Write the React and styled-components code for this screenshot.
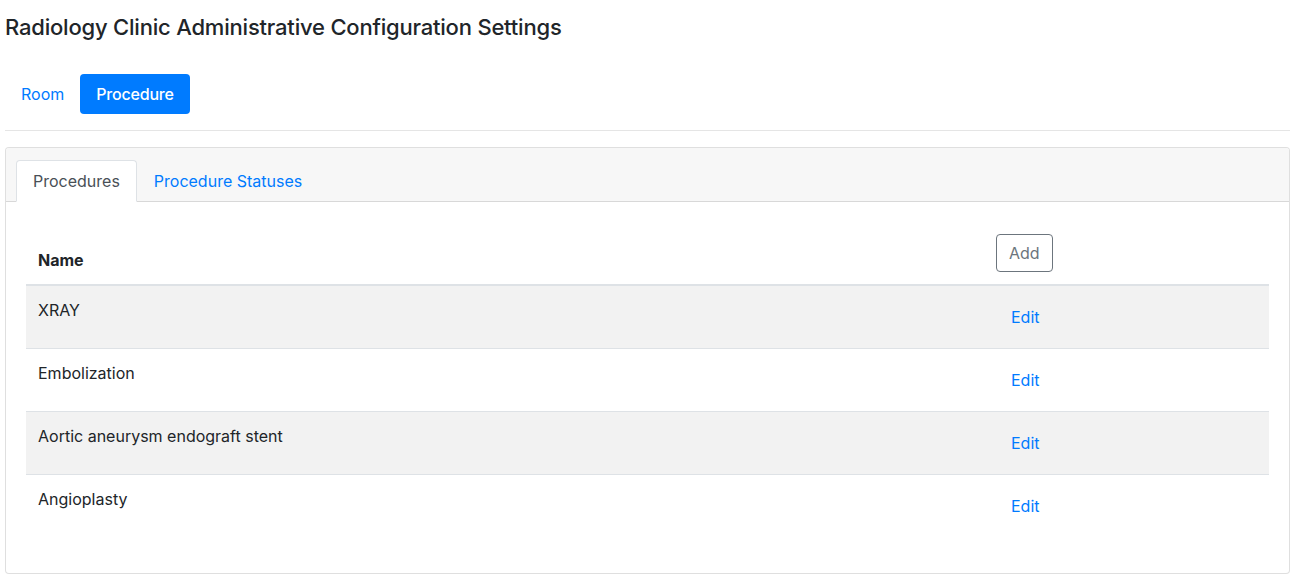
import React from "react";
import styled, { createGlobalStyle } from "styled-components";

const Global = createGlobalStyle`
  * { box-sizing: border-box; }
  body {
    margin: 0;
    font-family: Inter, "Noto Sans", "Liberation Sans", sans-serif;
    font-size: 16px;
    line-height: 1.5;
    color: #212529;
    background: #fff;
  }
`;

const Page = styled.div`
  padding: 13px 9px 0 5px;
`;

const Title = styled.h4`
  margin: 0;
  font-size: 22px;
  font-weight: 500;
  line-height: 1.3;
  letter-spacing: -0.2px;
  color: #212529;
`;

const Pills = styled.nav`
  display: flex;
  margin-top: 32px;
`;

const Pill = styled.a`
  display: block;
  padding: 8px 16px;
  border-radius: 4px;
  font-size: 16px;
  line-height: 24px;
  text-decoration: none;
  cursor: pointer;
  color: ${(p) => (p.$active ? "#fff" : "#007bff")};
  background: ${(p) => (p.$active ? "#007bff" : "transparent")};
  font-weight: ${(p) => (p.$active ? 500 : 400)};
  letter-spacing: ${(p) => (p.$active ? "-0.2px" : "0")};
`;

const Rule = styled.hr`
  margin: 16px 0 16px;
  border: 0;
  border-top: 1px solid rgba(0, 0, 0, 0.1);
`;

const Card = styled.div`
  border: 1px solid rgba(0, 0, 0, 0.125);
  border-radius: 4px;
  background: #fff;
`;

const CardHeader = styled.div`
  background: #f7f7f7;
  border-bottom: 1px solid rgba(0, 0, 0, 0.125);
  padding: 12px 20px 0 10px;
  border-radius: 3px 3px 0 0;
`;

const Tabs = styled.ul`
  display: flex;
  list-style: none;
  margin: 0 0 -1px;
  padding: 0;
`;

const Tab = styled.li`
  padding: 8px 16px;
  font-size: 16px;
  line-height: 24px;
  border: 1px solid ${(p) => (p.$active ? "#dee2e6" : "transparent")};
  border-bottom-color: ${(p) => (p.$active ? "#fff" : "transparent")};
  border-radius: 4px 4px 0 0;
  background: ${(p) => (p.$active ? "#fff" : "transparent")};
  color: ${(p) => (p.$active ? "#495057" : "#007bff")};
  cursor: pointer;
`;

const CardBody = styled.div`
  padding: 20px 20px 36px;
`;

const Table = styled.table`
  width: 100%;
  border-collapse: collapse;
  table-layout: fixed;
`;

const Th = styled.th`
  padding: 12px;
  text-align: left;
  vertical-align: bottom;
  font-weight: 700;
  font-size: 16px;
  line-height: 24px;
  border-bottom: 2px solid #dee2e6;
  width: ${(p) => p.$w || "auto"};
`;

const Row = styled.tr`
  background: ${(p) => (p.$striped ? "#f2f2f2" : "transparent")};
`;

const Td = styled.td`
  padding: 12px;
  vertical-align: top;
  font-size: 16px;
  line-height: 24px;
  border-top: ${(p) => (p.$first ? "0" : "1px solid #dee2e6")};
`;

const OutlineButton = styled.button`
  font-family: inherit;
  font-size: 16px;
  line-height: 24px;
  padding: 6px 12px;
  border: 1px solid #6c757d;
  border-radius: 4px;
  background: transparent;
  color: #6c757d;
  cursor: pointer;
`;

const LinkButton = styled.button`
  font-family: inherit;
  font-size: 16px;
  line-height: 24px;
  padding: 6px 14px;
  border: 1px solid transparent;
  background: transparent;
  color: #007bff;
  cursor: pointer;
`;

const procedures = ["XRAY", "Embolization", "Aortic aneurysm endograft stent", "Angioplasty"];

export default function App() {
  return (
    <Page>
      <Global />
      <Title>Radiology Clinic Administrative Configuration Settings</Title>
      <Pills>
        <Pill>Room</Pill>
        <Pill $active>Procedure</Pill>
      </Pills>
      <Rule />
      <Card>
        <CardHeader>
          <Tabs>
            <Tab $active>Procedures</Tab>
            <Tab>Procedure Statuses</Tab>
          </Tabs>
        </CardHeader>
        <CardBody>
          <Table>
            <thead>
              <tr>
                <Th>Name</Th>
                <Th $w="285px">
                  <OutlineButton>Add</OutlineButton>
                </Th>
              </tr>
            </thead>
            <tbody>
              {procedures.map((name, i) => (
                <Row key={name} $striped={i % 2 === 0}>
                  <Td $first={i === 0}>{name}</Td>
                  <Td $first={i === 0}>
                    <LinkButton>Edit</LinkButton>
                  </Td>
                </Row>
              ))}
            </tbody>
          </Table>
        </CardBody>
      </Card>
    </Page>
  );
}
